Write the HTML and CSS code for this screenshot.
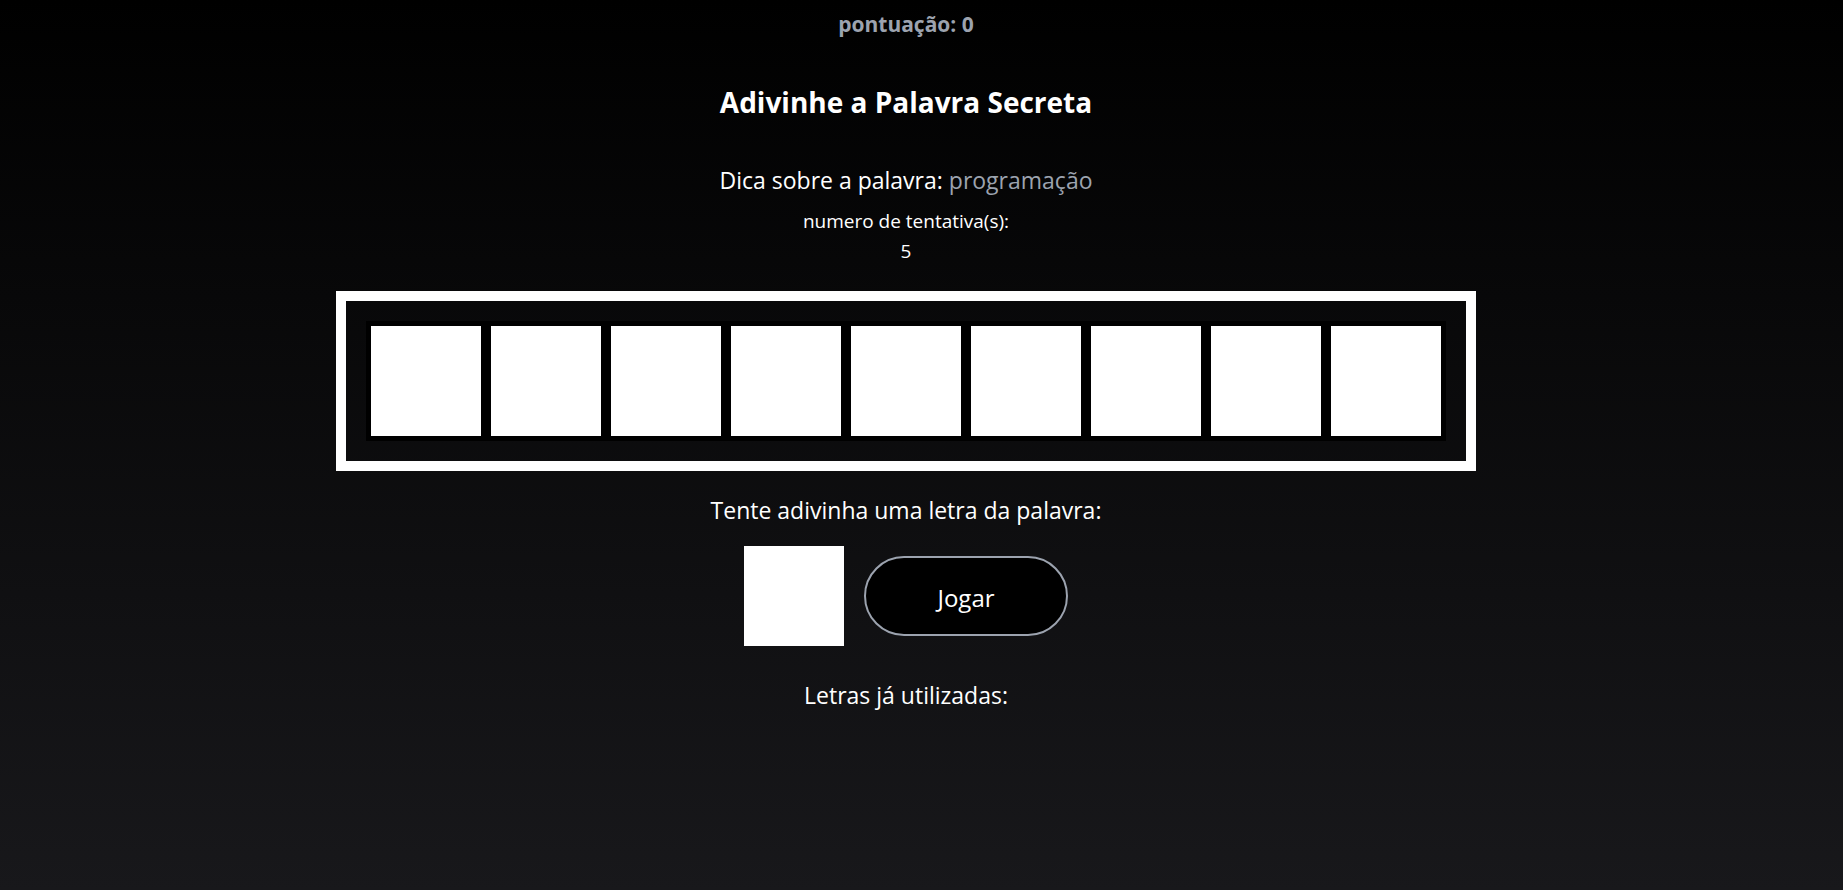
FILE: index.html
```html
<!DOCTYPE html>
<html lang="pt-BR">
<head>
<meta charset="utf-8">
<title>Palavra Secreta</title>
<link rel="stylesheet" href="styles.css">
</head>
<body>
<main class="game">
  <p class="score">pontuação: 0</p>
  <h1 class="title">Adivinhe a Palavra Secreta</h1>
  <p class="tip">Dica sobre a palavra: <span class="tip-category">programação</span></p>
  <p class="attempts">numero de tentativa(s):<br>5</p>
  <div class="word">
    <span class="square"></span>
    <span class="square"></span>
    <span class="square"></span>
    <span class="square"></span>
    <span class="square"></span>
    <span class="square"></span>
    <span class="square"></span>
    <span class="square"></span>
    <span class="square"></span>
  </div>
  <form class="guess">
    <label class="guess-label" for="letter">Tente adivinha uma letra da palavra:</label>
    <div class="guess-row">
      <input class="letter" id="letter" type="text" maxlength="1" autocomplete="off">
      <button class="play" type="button">Jogar</button>
    </div>
  </form>
  <p class="used">Letras já utilizadas:</p>
</main>
</body>
</html>
```

FILE: styles.css
```css
* {
  box-sizing: border-box;
}

body {
  margin: 0;
  min-height: 100vh;
  padding-right: 31px;
  background: linear-gradient(to bottom, #000, #18181b);
  color: #fff;
  font-family: "Segoe UI", "Open Sans", "Noto Sans", sans-serif;
  font-size: 23px;
  line-height: 36px;
}

.game {
  display: flex;
  flex-direction: column;
  align-items: center;
  text-align: center;
}

.score,
.title,
.tip,
.attempts,
.used {
  margin: 0;
}

.score {
  color: #9ca3af;
  font-size: 21px;
  font-weight: 700;
  line-height: 48px;
}

.title {
  margin-top: 34px;
  font-size: 28px;
  font-weight: 700;
  line-height: 40px;
}

.tip {
  margin-top: 40px;
}

.tip-category {
  color: #9ca3af;
}

.attempts {
  margin-top: 8px;
  font-size: 19px;
  line-height: 30px;
}

.word {
  display: flex;
  margin-top: 25px;
  padding: 20px;
  border: 10px solid #fff;
}

.square {
  width: 120px;
  height: 120px;
  border: 5px solid #000;
  background: #fff;
}

.guess {
  display: flex;
  flex-direction: column;
  align-items: center;
  gap: 18px;
  margin-top: 21px;
}

.guess-row {
  display: flex;
  align-items: center;
  gap: 20px;
}

.letter {
  width: 100px;
  height: 100px;
  padding: 0;
  border: 0;
  background: #fff;
  color: #000;
  font: inherit;
  font-size: 48px;
  text-align: center;
}

.play {
  width: 204px;
  height: 80px;
  padding: 4px 0 0;
  border: 2px solid #9ca3af;
  border-radius: 40px;
  background: #000;
  color: #fff;
  font: inherit;
  font-size: 24px;
  cursor: pointer;
}

.used {
  margin-top: 31px;
}
```
